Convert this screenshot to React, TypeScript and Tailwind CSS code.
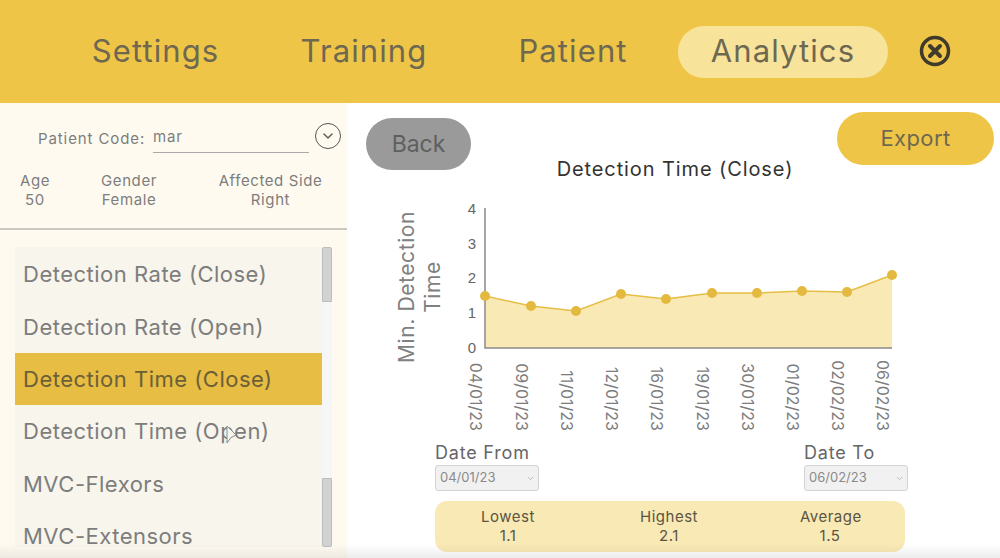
import { ChevronDown } from 'lucide-react';

const navItems = [
  { label: 'Settings', className: 'w-[209px]', active: false },
  { label: 'Training', className: 'w-[208px]', active: false },
  { label: 'Patient', className: 'w-[210px]', active: false },
  { label: 'Analytics', className: 'w-[210px] bg-[#f8e39b] rounded-full', active: true },
];

const metrics = [
  'Detection Rate (Close)',
  'Detection Rate (Open)',
  'Detection Time (Close)',
  'Detection Time (Open)',
  'MVC-Flexors',
  'MVC-Extensors',
];

const points = [
  { x: 105, y: 101, date: '04/01/23' },
  { x: 151, y: 111, date: '09/01/23' },
  { x: 196, y: 116, date: '11/01/23' },
  { x: 241, y: 99, date: '12/01/23' },
  { x: 286, y: 104, date: '16/01/23' },
  { x: 332, y: 98, date: '19/01/23' },
  { x: 377, y: 98, date: '30/01/23' },
  { x: 422, y: 96, date: '01/02/23' },
  { x: 467, y: 97, date: '02/02/23' },
  { x: 512, y: 80, date: '06/02/23' },
];

const stats = [
  { label: 'Lowest', value: '1.1' },
  { label: 'Highest', value: '2.1' },
  { label: 'Average', value: '1.5' },
];

const font = { fontFamily: 'Inter, sans-serif' };

function Chart() {
  const line = points.map((p) => `${p.x},${p.y}`).join(' ');
  return (
    <svg width="530" height="245" viewBox="0 0 530 245" className="block" style={font}>
      <polygon points={`105,153 ${line} 512,153`} fill="#f9e9b5" />
      <path d="M105 13V153H512" fill="none" stroke="#8a8a8a" strokeWidth="1.5" />
      <polyline points={line} fill="none" stroke="#e6bd45" strokeWidth="1.5" />
      {points.map((p) => (
        <circle key={p.date} cx={p.x} cy={p.y} r="5" fill="#e3b93f" />
      ))}
      {[4, 3, 2, 1, 0].map((t, i) => (
        <text key={t} x="92" y={19 + i * 34.7} textAnchor="middle" fontSize="15" fill="#666" fontFamily="Liberation Sans, sans-serif">
          {t}
        </text>
      ))}
      {points.map((p) => (
        <text
          key={p.date}
          transform={`translate(${p.x - 15} 236) rotate(90)`}
          textAnchor="end"
          fontSize="16"
          fill="#7d7d7d"
        >
          {p.date}
        </text>
      ))}
      <text transform="translate(34 92) rotate(-90)" textAnchor="middle" fontSize="21" letterSpacing="0.6" fill="#808080">
        Min. Detection
      </text>
      <text transform="translate(60 92) rotate(-90)" textAnchor="middle" fontSize="21" letterSpacing="0.6" fill="#808080">
        Time
      </text>
    </svg>
  );
}

function DateField({ label, value }: { label: string; value: string }) {
  return (
    <div className="w-[104px]">
      <div className="text-[18px] leading-[20px] text-[#666] tracking-[0.8px]">{label}</div>
      <div className="mt-[2px] flex h-[26px] items-center justify-between rounded-[3px] border border-[#d4d4d4] bg-[#f1f1f1] pl-[4px] pr-[3px] text-[13px] text-[#8a8a8a]">
        {value}
        <ChevronDown className="h-[9px] w-[9px] text-[#aaa]" />
      </div>
    </div>
  );
}

export default function App() {
  return (
    <div className="relative flex h-[558px] w-[1000px] flex-col overflow-hidden bg-white" style={font}>
      <header className="flex h-[103px] shrink-0 items-center bg-[#efc547] pl-[51px] text-[31px] tracking-[1.1px] text-[#6e6851]">
        {navItems.map((item) => (
          <div key={item.label} className={`flex h-[52px] items-center justify-center ${item.className}`}>
            {item.label}
          </div>
        ))}
        <svg width="32" height="32" viewBox="0 0 32 32" className="mb-[2px] ml-[31px]">
          <circle cx="16" cy="16" r="13.5" fill="none" stroke="#3f3a2c" strokeWidth="3.5" />
          <path d="M11 11L21 21M21 11L11 21" stroke="#3f3a2c" strokeWidth="4" strokeLinecap="round" />
        </svg>
      </header>

      <div className="flex min-h-0 flex-1">
        <aside className="flex w-[347px] shrink-0 flex-col bg-[#fefaf0] text-[#7d7d7d]">
          <div className="h-[127px] shrink-0 border-b-2 border-[#c9c8c2]">
            <div className="flex items-start pl-[38px] pt-[21px] text-[15px] tracking-[0.9px]">
              <span className="mt-[4px] w-[115px]">Patient Code:</span>
              <span className="mt-[2px] h-[27px] w-[156px] border-b border-[#aaa] leading-[22px]">mar</span>
              <span className="ml-[6px] -mt-[1px] flex h-[26px] w-[26px] items-center justify-center rounded-full border-[1.5px] border-[#555]">
                <ChevronDown className="h-[16px] w-[16px] text-[#555]" />
              </span>
            </div>
            <div className="mt-[18px] flex text-center text-[15px] leading-[19px] tracking-[0.6px]">
              <div className="ml-[19px] w-[32px]">Age<br />50</div>
              <div className="ml-[48px] w-[60px]">Gender<br />Female</div>
              <div className="ml-[59px] w-[105px] whitespace-nowrap">Affected Side<br />Right</div>
            </div>
          </div>

          <div className="ml-[15px] mt-[17px] flex h-[300px] w-[317px]">
            <ul className="w-[307px] bg-[#f7f5ec] pt-[1px]">
              {metrics.map((m) => (
                <li
                  key={m}
                  className={`flex h-[52.4px] items-center pl-[8px] pt-[1px] text-[22px] tracking-[0.5px] ${
                    m === 'Detection Time (Close)' ? 'bg-[#e7bd43] text-[#6b6038]' : 'text-[#7d7d7d]'
                  }`}
                >
                  {m}
                </li>
              ))}
            </ul>
            <div className="flex w-[10px] flex-col">
              <div className="h-[55px] rounded-t-[2px] border border-[#bdbdbd] bg-[#d2d2d2]" />
              <div className="h-[176px] bg-[#f6f6f6]" />
              <div className="flex-1 rounded-b-[2px] border border-[#bdbdbd] bg-[#d2d2d2]" />
            </div>
          </div>
        </aside>

        <main className="flex min-w-0 flex-1 flex-col">
          <div className="grid h-[92px] shrink-0 grid-cols-[124px_1fr_163px] items-start">
            <button className="ml-[19px] mt-[15px] h-[52px] w-[105px] rounded-full bg-[#9a9a9a] text-[23px] text-[#5f5f5f]">
              Back
            </button>
            <div className="mt-[54px] whitespace-nowrap pl-[42px] text-center text-[20px] leading-[24px] tracking-[0.9px] text-[#333]">
              Detection Time (Close)
            </div>
            <button className="mt-[9px] h-[53px] w-[157px] rounded-full bg-[#efc547] text-[22px] tracking-[0.4px] text-[#6e6851]">
              Export
            </button>
          </div>

          <div className="ml-[33px]">
            <Chart />
          </div>

          <div className="ml-[88px] mt-[3px] flex w-[473px] items-start justify-between">
            <DateField label="Date From" value="04/01/23" />
            <DateField label="Date To" value="06/02/23" />
          </div>

          <div className="ml-[88px] mt-[10px] flex h-[51px] w-[470px] items-center justify-between rounded-[12px] bg-[#f9e9b5] pb-[1px] pl-[43px] pr-[45px] text-center text-[15px] leading-[19px] tracking-[0.5px] text-[#5a5442]">
            {stats.map((s) => (
              <div key={s.label} className="w-[60px]">
                {s.label}
                <br />
                {s.value}
              </div>
            ))}
          </div>
        </main>
      </div>

      {/* mouse pointer caught in the frame */}
      <svg width="11" height="20" viewBox="0 0 11 20" className="absolute left-[226px] top-[425px]">
        <path d="M1 1V18L5 12.5L10 10Z" fill="#f7f5ec" stroke="#8a8a8a" strokeWidth="1" strokeLinejoin="round" />
      </svg>

      {/* fade along the bottom edge of the frame */}
      <div className="pointer-events-none absolute bottom-0 left-0 h-[14px] w-full bg-gradient-to-b from-transparent to-[#00000012]" />
    </div>
  );
}
